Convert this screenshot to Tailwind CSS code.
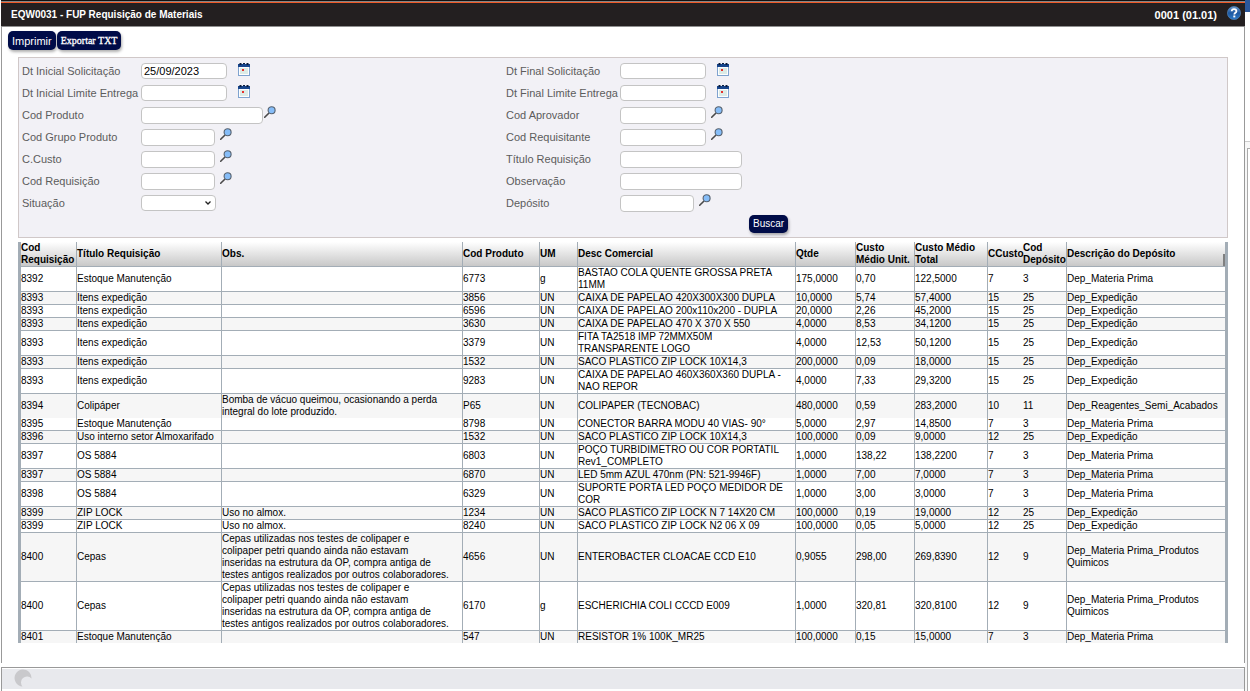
<!DOCTYPE html>
<html lang="pt-BR">
<head>
<meta charset="utf-8">
<meta name="viewport" content="width=device-width, initial-scale=1">
<title>EQW0031 - FUP Requisição de Materiais</title>
<script src="https://cdn.jsdelivr.net/npm/@tailwindcss/browser@4"></script>
</head>
<body class="flex min-h-screen bg-white pl-px font-['Liberation_Sans',Arial,sans-serif] text-[10px] leading-3 text-black">
<svg class="hidden" aria-hidden="true">
  <symbol id="cal" viewBox="0 0 12 13">
    <rect x=".5" y="1.500" width="11" height="11" fill="#fdfeff" stroke="#7fa3cf"/>
    <rect x="2" y="5" width="8" height="6" fill="#dcebe6"/>
    <rect x="0" y="1" width="12" height="3" fill="#17458c"/>
    <path d="M1.500 0h2v2h-2zM5 0h2v1H5zM8.500 0h2v2h-2z" fill="#0b1c3c"/>
    <rect x="4" y="6" width="2" height="2" fill="#e8302a"/>
  </symbol>
  <symbol id="lens" viewBox="0 0 12 12">
    <path d="M.7 11.300 5 7" stroke="#4a4a4a" stroke-width="1.600" stroke-linecap="round"/>
    <circle cx="7.600" cy="4.200" r="3.500" fill="#86bdf8" stroke="#56616e" stroke-width="1.100"/>
  </symbol>
</svg>

<div class="flex min-w-0 flex-1 flex-col">
  <header class="flex h-[27px] items-center justify-between border-b border-[#8f8f8f] bg-[#231f20] pr-1 pl-2.5 font-bold text-white shadow-[inset_0_1px_#111,inset_0_2px_#858585,inset_0_3px_#f05a28]">
    <h1 class="pt-1">EQW0031 - FUP Requisição de Materiais</h1>
    <div class="flex items-center gap-2.5">
      <span class="pt-1 text-[11px]">0001 (01.01)</span>
      <a href="#" aria-label="Ajuda"><svg class="size-[14px]" viewBox="0 0 14 14">
        <defs><linearGradient id="hg" x1="0" y1="0" x2="0" y2="1"><stop offset="0" stop-color="#6a9bd0"/><stop offset=".5" stop-color="#1d57a0"/><stop offset="1" stop-color="#2f7cc9"/></linearGradient></defs>
        <circle cx="7" cy="7" r="6.600" fill="url(#hg)" stroke="#5587bb" stroke-width=".6"/>
        <path d="M4.700 5.300C4.800 3.800 5.700 3.200 7 3.200s2.400.8 2.400 2c0 1.600-2.100 1.600-2.100 3.300" fill="none" stroke="#fff" stroke-width="1.800"/>
        <rect x="6.300" y="9.500" width="2" height="1.900" fill="#fff"/>
      </svg></a>
    </div>
  </header>

  <main class="flex-1 border-x border-[#999] pt-1 pr-4 pl-4">
    <div class="-ml-2.5 flex gap-px">
      <button class="h-[19px] rounded-[5px] bg-[#000c48] px-1 text-[11px] text-white shadow-[1px_2px_3px_#00000050]">Imprimir</button>
      <button class="h-[19px] rounded-[5px] bg-[#000c48] px-1 font-['Liberation_Serif',serif] text-[10px] text-white shadow-[1px_2px_3px_#00000050] [-webkit-text-stroke:0.3px_white]">Exportar TXT</button>
    </div>

    <form class="mt-[7px] h-[181px] border border-[#d0c8c8] bg-[#f2f1f6] px-[3px] pt-0.5">
      <div class="grid auto-rows-[22px] grid-cols-[119px_365px_114px_1fr] items-center text-[11px] whitespace-nowrap text-[#5c5c5c]">
        <label for="f1">Dt Inicial Solicitação</label>
        <div class="flex"><input id="f1" value="25/09/2023" class="h-4 w-[86px] rounded-[4px] border border-[#c4c4c4] bg-white px-0.5 text-black"><button type="button" aria-label="Calendário" class="-mt-1 ml-[11px]"><svg class="h-[13px] w-3"><use href="#cal"/></svg></button></div>
        <label for="f2">Dt Final Solicitação</label>
        <div class="flex"><input id="f2" class="h-4 w-[86px] rounded-[4px] border border-[#c4c4c4] bg-white px-0.5 text-black"><button type="button" aria-label="Calendário" class="-mt-1 ml-[11px]"><svg class="h-[13px] w-3"><use href="#cal"/></svg></button></div>

        <label for="f3">Dt Inicial Limite Entrega</label>
        <div class="flex"><input id="f3" class="h-4 w-[86px] rounded-[4px] border border-[#c4c4c4] bg-white px-0.5 text-black"><button type="button" aria-label="Calendário" class="-mt-1 ml-[11px]"><svg class="h-[13px] w-3"><use href="#cal"/></svg></button></div>
        <label for="f4">Dt Final Limite Entrega</label>
        <div class="flex"><input id="f4" class="h-4 w-[86px] rounded-[4px] border border-[#c4c4c4] bg-white px-0.5 text-black"><button type="button" aria-label="Calendário" class="-mt-1 ml-[11px]"><svg class="h-[13px] w-3"><use href="#cal"/></svg></button></div>

        <label for="f5">Cod Produto</label>
        <div class="flex"><input id="f5" class="h-[17px] w-[122px] rounded-[4px] border border-[#c4c4c4] bg-white px-0.5 text-black"><button type="button" aria-label="Pesquisar" class="-mt-1.5 ml-px"><svg class="size-3"><use href="#lens"/></svg></button></div>
        <label for="f6">Cod Aprovador</label>
        <div class="flex"><input id="f6" class="h-[17px] w-[86px] rounded-[4px] border border-[#c4c4c4] bg-white px-0.5 text-black"><button type="button" aria-label="Pesquisar" class="-mt-1.5 ml-[5px]"><svg class="size-3"><use href="#lens"/></svg></button></div>

        <label for="f7">Cod Grupo Produto</label>
        <div class="flex"><input id="f7" class="h-[17px] w-[74px] rounded-[4px] border border-[#c4c4c4] bg-white px-0.5 text-black"><button type="button" aria-label="Pesquisar" class="-mt-1.5 ml-[5px]"><svg class="size-3"><use href="#lens"/></svg></button></div>
        <label for="f8">Cod Requisitante</label>
        <div class="flex"><input id="f8" class="h-[17px] w-[86px] rounded-[4px] border border-[#c4c4c4] bg-white px-0.5 text-black"><button type="button" aria-label="Pesquisar" class="-mt-1.5 ml-[5px]"><svg class="size-3"><use href="#lens"/></svg></button></div>

        <label for="f9">C.Custo</label>
        <div class="flex"><input id="f9" class="h-[17px] w-[74px] rounded-[4px] border border-[#c4c4c4] bg-white px-0.5 text-black"><button type="button" aria-label="Pesquisar" class="-mt-1.5 ml-[5px]"><svg class="size-3"><use href="#lens"/></svg></button></div>
        <label for="f10">Título Requisição</label>
        <div class="flex"><input id="f10" class="h-[17px] w-[122px] rounded-[4px] border border-[#c4c4c4] bg-white px-0.5 text-black"></div>

        <label for="f11">Cod Requisição</label>
        <div class="flex"><input id="f11" class="h-[17px] w-[74px] rounded-[4px] border border-[#c4c4c4] bg-white px-0.5 text-black"><button type="button" aria-label="Pesquisar" class="-mt-1.5 ml-[5px]"><svg class="size-3"><use href="#lens"/></svg></button></div>
        <label for="f12">Observação</label>
        <div class="flex"><input id="f12" class="h-[17px] w-[122px] rounded-[4px] border border-[#c4c4c4] bg-white px-0.5 text-black"></div>

        <label for="f13">Situação</label>
        <div class="grid w-[75px] items-center"><select id="f13" class="col-start-1 row-start-1 h-4 appearance-none rounded-[4px] border border-[#c4c4c4] bg-white text-black"><option></option></select><svg class="pointer-events-none col-start-1 row-start-1 mr-[5px] h-1 w-1.5 justify-self-end" viewBox="0 0 6 4"><path d="M.5.500 3 3 5.500.500" fill="none" stroke="#222" stroke-width="1.300"/></svg></div>
        <label for="f14">Depósito</label>
        <div class="flex"><input id="f14" class="h-[17px] w-[74px] rounded-[4px] border border-[#c4c4c4] bg-white px-0.5 text-black"><button type="button" aria-label="Pesquisar" class="-mt-1.5 ml-[5px]"><svg class="size-3"><use href="#lens"/></svg></button></div>
      </div>
      <button type="button" class="mt-px ml-[727px] block h-[18px] rounded-[5px] bg-[#000c48] px-1 text-[10px] text-white shadow-[1px_2px_3px_#00000050]">Buscar</button>
    </form>

    <section class="relative mt-1 border-x-[3px] border-[#a3adb6]">
      <table class="w-full table-fixed border-separate border-spacing-0 whitespace-nowrap">
        <colgroup><col class="w-[56px]"><col class="w-[145px]"><col class="w-[241px]"><col class="w-[77px]"><col class="w-[38px]"><col class="w-[218px]"><col class="w-[60px]"><col class="w-[59px]"><col class="w-[73px]"><col class="w-[35px]"><col class="w-[44px]"><col></colgroup>
        <thead><tr id="head" class="h-[25px] bg-linear-to-b from-white to-[#c6c6c6] text-left"></tr></thead>
        <tbody id="rows"></tbody>
      </table>
      <div class="absolute top-3 right-0 h-3 w-0.5 bg-[#808080]"></div>
    </section>
  </main>

  <footer class="mt-1 border border-[#999] border-b-0 pt-px pb-0.5">
    <div class="h-5 bg-[#e8e9ed] pl-3">
      <svg class="size-[18px]" viewBox="0 0 18 18"><path d="M15.500 3.500A8.500 8.500 0 1 0 8.500 17.500 5.700 5.700 0 1 1 17.500 9.500 8.500 8.500 0 0 0 15.500 3.500Z" fill="#c9c9cc"/></svg>
    </div>
  </footer>
</div>

<aside class="flex w-[5px] flex-col">
  <div class="h-3 bg-[#2b579a]"></div>
  <div class="h-[130px] border-b border-[#ccc]"></div>
  <div class="flex-1 bg-[#f7f7f7] pt-1.5 pl-0.5"><div class="h-full border-t border-l border-[#aaa] bg-white"></div></div>
</aside>

<script>
const head = ["Cod\nRequisição", "Título Requisição", "Obs.", "Cod Produto", "UM", "Desc Comercial", "Qtde", "Custo\nMédio Unit.", "Custo Médio\nTotal", "CCusto", "Cod\nDepósito", "Descrição do Depósito"];
const cepas = "Cepas utilizadas nos testes de colipaper e\ncolipaper petri quando ainda não estavam\ninseridas na estrutura da OP, compra antiga de\ntestes antigos realizados por outros colaboradores.";
const rows = [
["8392","Estoque Manutenção","","6773","g","BASTAO COLA QUENTE GROSSA PRETA\n11MM","175,0000","0,70","122,5000","7","3","Dep_Materia Prima"],
["8393","Itens expedição","","3856","UN","CAIXA DE PAPELAO 420X300X300 DUPLA","10,0000","5,74","57,4000","15","25","Dep_Expedição"],
["8393","Itens expedição","","6596","UN","CAIXA DE PAPELAO 200x110x200 - DUPLA","20,0000","2,26","45,2000","15","25","Dep_Expedição"],
["8393","Itens expedição","","3630","UN","CAIXA DE PAPELAO 470 X 370 X 550","4,0000","8,53","34,1200","15","25","Dep_Expedição"],
["8393","Itens expedição","","3379","UN","FITA TA2518 IMP 72MMX50M\nTRANSPARENTE LOGO","4,0000","12,53","50,1200","15","25","Dep_Expedição"],
["8393","Itens expedição","","1532","UN","SACO PLASTICO ZIP LOCK 10X14,3","200,0000","0,09","18,0000","15","25","Dep_Expedição"],
["8393","Itens expedição","","9283","UN","CAIXA DE PAPELAO 460X360X360 DUPLA -\nNAO REPOR","4,0000","7,33","29,3200","15","25","Dep_Expedição"],
["8394","Colipáper","Bomba de vácuo queimou, ocasionando a perda\nintegral do lote produzido.","P65","UN","COLIPAPER (TECNOBAC)","480,0000","0,59","283,2000","10","11","Dep_Reagentes_Semi_Acabados"],
["8395","Estoque Manutenção","","8798","UN","CONECTOR BARRA MODU 40 VIAS- 90°","5,0000","2,97","14,8500","7","3","Dep_Materia Prima"],
["8396","Uso interno setor Almoxarifado","","1532","UN","SACO PLASTICO ZIP LOCK 10X14,3","100,0000","0,09","9,0000","12","25","Dep_Expedição"],
["8397","OS 5884","","6803","UN","POÇO TURBIDIMETRO OU COR PORTATIL\nRev1_COMPLETO","1,0000","138,22","138,2200","7","3","Dep_Materia Prima"],
["8397","OS 5884","","6870","UN","LED 5mm AZUL 470nm (PN: 521-9946F)","1,0000","7,00","7,0000","7","3","Dep_Materia Prima"],
["8398","OS 5884","","6329","UN","SUPORTE PORTA LED POÇO MEDIDOR DE\nCOR","1,0000","3,00","3,0000","7","3","Dep_Materia Prima"],
["8399","ZIP LOCK","Uso no almox.","1234","UN","SACO PLASTICO ZIP LOCK N 7 14X20 CM","100,0000","0,19","19,0000","12","25","Dep_Expedição"],
["8399","ZIP LOCK","Uso no almox.","8240","UN","SACO PLASTICO ZIP LOCK N2 06 X 09","100,0000","0,05","5,0000","12","25","Dep_Expedição"],
["8400","Cepas",cepas,"4656","UN","ENTEROBACTER CLOACAE CCD E10","0,9055","298,00","269,8390","12","9","Dep_Materia Prima_Produtos\nQuimicos"],
["8400","Cepas",cepas,"6170","g","ESCHERICHIA COLI CCCD E009","1,0000","320,81","320,8100","12","9","Dep_Materia Prima_Produtos\nQuimicos"],
["8401","Estoque Manutenção","","547","UN","RESISTOR 1% 100K_MR25","100,0000","0,15","15,0000","7","3","Dep_Materia Prima"]
];
const side = i => i === 9 || i === 11 ? "" : " border-r";
const add = (tr, tag, text, cls) => {
  const c = document.createElement(tag);
  c.className = cls;
  c.textContent = text;
  tr.append(c);
};
head.forEach((t, i) => add(document.getElementById("head"), "th", t, "border-b border-[#a3adb6] p-0 align-middle whitespace-pre" + side(i)));
rows.forEach((r, n) => {
  const tr = document.createElement("tr");
  tr.className = n % 2 ? "bg-[#f6f6f6]" : "bg-white";
  const line = n === 7 || n === rows.length - 1 ? "" : " border-b";
  r.forEach((t, i) => add(tr, "td", t, "border-[#a3adb6] p-0 align-middle whitespace-pre" + side(i) + line));
  document.getElementById("rows").append(tr);
});
</script>
</body>
</html>
